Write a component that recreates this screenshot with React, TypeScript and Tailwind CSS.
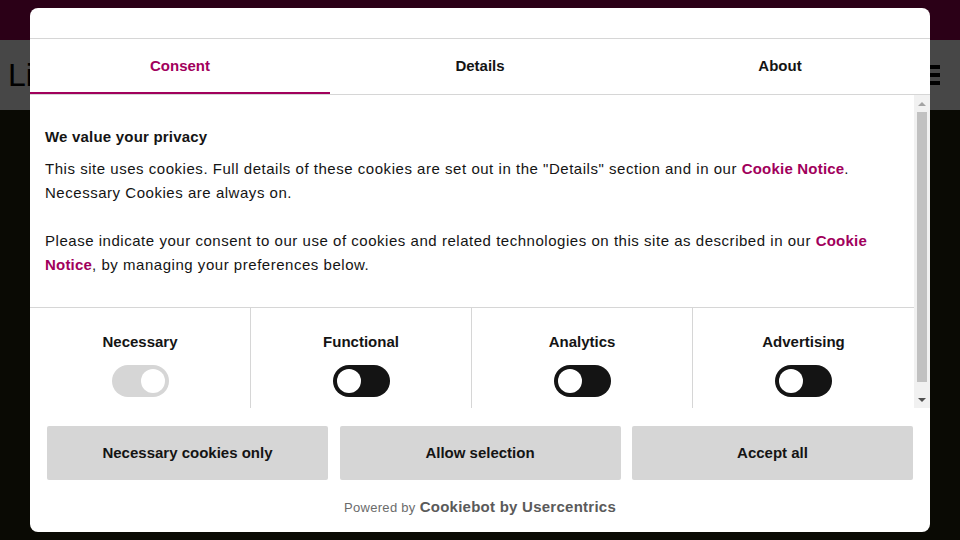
import React, { useState } from 'react';

const FONT = "font-['Liberation_Sans',Arial,sans-serif]";

const categories = [
    { name: 'Necessary', locked: true },
    { name: 'Functional', locked: false },
    { name: 'Analytics', locked: false },
    { name: 'Advertising', locked: false },
];

const Toggle: React.FC<{ checked: boolean; locked?: boolean; onChange: () => void }> = ({ checked, locked, onChange }) => (
    <button
        onClick={locked ? undefined : onChange}
        className={`w-[57px] h-[32px] rounded-full flex items-center px-[4px] ${locked ? 'bg-[#d6d6d6] justify-end' : checked ? 'bg-[#a1005c] justify-end' : 'bg-[#141414] justify-start'}`}
    >
        <span className="block w-[24px] h-[24px] rounded-full bg-white" />
    </button>
);

export default function App() {
    const [tab, setTab] = useState('Consent');
    const [prefs, setPrefs] = useState<Record<string, boolean>>({ Functional: false, Analytics: false, Advertising: false });

    return (
        <div className={`relative w-[960px] h-[540px] overflow-hidden bg-[#0a0a04] ${FONT}`}>
            {/* page behind the dialog */}
            <div className="h-[40px] bg-[#2b0017]" />
            <div className="h-[70px] bg-[#474747] flex items-center justify-between pl-[8px] pr-[20px]">
                <span className="text-[32px] text-black leading-none">Lifestyle</span>
                <div className="flex flex-col gap-[4px]">
                    <span className="block w-[10px] h-[4px] bg-black" />
                    <span className="block w-[10px] h-[4px] bg-black" />
                    <span className="block w-[10px] h-[4px] bg-black" />
                </div>
            </div>

            {/* dialog */}
            <div className="absolute left-[30px] top-[8px] w-[900px] h-[524px] bg-white rounded-[8px] flex flex-col overflow-hidden">
                <div className="h-[31px] border-b border-[#d6d6d6] shrink-0" />
                <div className="flex h-[56px] border-b border-[#d6d6d6] shrink-0">
                    {['Consent', 'Details', 'About'].map(t => (
                        <button
                            key={t}
                            onClick={() => setTab(t)}
                            className={`flex-1 flex items-center justify-center pt-[2px] text-[15px] font-bold border-b-2 ${tab === t ? 'text-[#a1005c] border-[#a1005c]' : 'text-[#141414] border-transparent'}`}
                        >
                            {t}
                        </button>
                    ))}
                </div>

                <div className="flex h-[313px] shrink-0">
                    <div className="flex-1 overflow-hidden">
                        <div className="pl-[15px] pr-[30px] pt-[30px] pb-[30px] border-b border-[#d6d6d6] text-[15px] leading-[24px] tracking-[0.53px] text-[#141414]">
                            <h2 className="font-bold tracking-[0.2px] mb-[8px]">We value your privacy</h2>
                            <p>
                                This site uses cookies. Full details of these cookies are set out in the "Details" section and in our{' '}
                                <a className="font-bold tracking-[0.2px] text-[#a1005c]">Cookie Notice</a>. Necessary Cookies are always on.
                            </p>
                            <p className="mt-[24px]">
                                Please indicate your consent to our use of cookies and related technologies on this site as described in our{' '}
                                <a className="font-bold tracking-[0.2px] text-[#a1005c]">Cookie Notice</a>, by managing your preferences below.
                            </p>
                        </div>
                        <div className="grid grid-cols-4">
                            {categories.map((c, i) => (
                                <div key={c.name} className={`flex flex-col items-center pt-[22px] pb-[11px] gap-[11px] ${i < 3 ? 'border-r border-[#d6d6d6]' : ''}`}>
                                    <span className="text-[15px] leading-[24px] font-bold text-[#141414]">{c.name}</span>
                                    <Toggle
                                        checked={!!prefs[c.name]}
                                        locked={c.locked}
                                        onChange={() => setPrefs({ ...prefs, [c.name]: !prefs[c.name] })}
                                    />
                                </div>
                            ))}
                        </div>
                    </div>
                    {/* scrollbar */}
                    <div className="w-[16px] bg-[#f1f1f1] flex flex-col items-center">
                        <div className="h-[17px] flex items-center justify-center">
                            <span className="block w-0 h-0 border-l-[4px] border-r-[4px] border-b-[4px] border-l-transparent border-r-transparent border-b-[#a3a3a3]" />
                        </div>
                        <div className="w-[10px] h-[270px] bg-[#c1c1c1]" />
                        <div className="flex-1 flex items-end justify-center pb-[6px]">
                            <span className="block w-0 h-0 border-l-[4px] border-r-[4px] border-t-[4px] border-l-transparent border-r-transparent border-t-[#505050]" />
                        </div>
                    </div>
                </div>

                <div className="flex gap-[11.5px] px-[17px] pt-[18px] shrink-0">
                    {['Necessary cookies only', 'Allow selection', 'Accept all'].map(b => (
                        <button key={b} className="flex-1 h-[54px] bg-[#d6d6d6] rounded-[2px] text-[15px] font-bold text-[#141414]">
                            {b}
                        </button>
                    ))}
                </div>

                <div className="flex-1 flex items-center justify-center gap-[4px] pt-[3px] text-[#6b6b6b]">
                    <span className="text-[13px] tracking-[0.3px]">Powered by</span>
                    <span className="text-[15px] font-bold tracking-[0.25px] text-[#5a5a5a]">Cookiebot by Usercentrics</span>
                </div>
            </div>
        </div>
    );
}
